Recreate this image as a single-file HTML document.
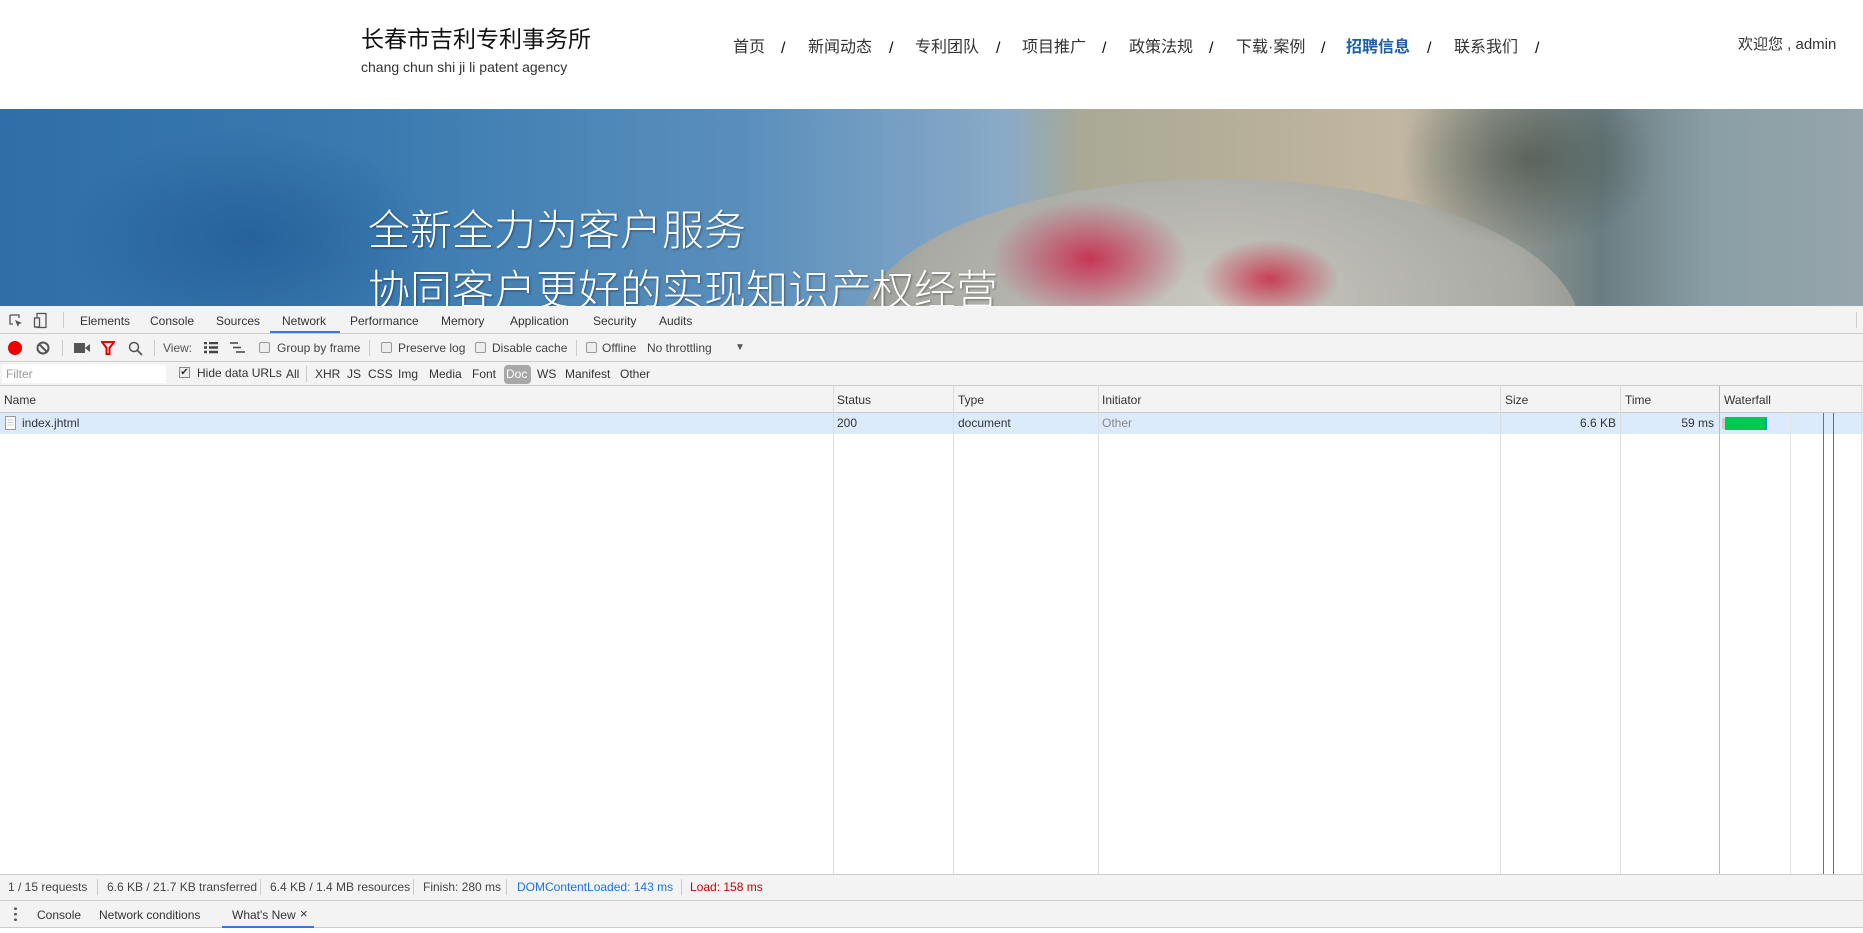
<!DOCTYPE html>
<html><head><meta charset="utf-8">
<style>
*{margin:0;padding:0;box-sizing:border-box}
body{width:1863px;height:933px;overflow:hidden;background:#fff;font-family:"Liberation Sans","Noto Sans CJK SC",sans-serif;position:relative}
.a{position:absolute;white-space:nowrap}
.hdr{position:absolute;left:0;top:0;width:1863px;height:109px;background:#fff}
.nav{font-size:16px;color:#333;top:38px;line-height:20px}
.sl{font-size:16px;color:#111;top:39px;line-height:20px}
.banner{position:absolute;left:0;top:109px;width:1863px;height:197px;overflow:hidden;
background:linear-gradient(90deg,#2f6ea8 0%,#3a7ab0 20%,#5a8fbc 40%,#8aaac8 54%,#a9a995 58%,#b8b09a 68%,#c2b7a2 75%,#6a7d82 86%,#8aa0a6 92%,#95a5ab 100%)}
.bt{color:#fff;font-size:42px;font-weight:300;text-shadow:1px 1px 2px rgba(0,0,0,.4)}
.dt{font-size:12px;color:#333;line-height:15px}
.row{position:absolute;left:0;width:1863px}
.cb{position:absolute;width:11px;height:11px;border:1px solid #999;background:#eee;border-radius:2px}
.sep{position:absolute;width:1px;background:#ccc}
.vl{position:absolute;top:386px;height:488px;width:1px;background:#ddd}
</style></head><body>
<div class="hdr">
 <div class="a" style="left:361px;top:20px;font-size:23px;color:#111">长春市吉利专利事务所</div>
 <div class="a" style="left:361px;top:59px;font-size:14px;color:#333">chang chun shi ji li patent agency</div>
 <div class="a nav" style="left:733px">首页</div><div class="a sl" style="left:781px">/</div>
 <div class="a nav" style="left:808px">新闻动态</div><div class="a sl" style="left:889px">/</div>
 <div class="a nav" style="left:915px">专利团队</div><div class="a sl" style="left:996px">/</div>
 <div class="a nav" style="left:1022px">项目推广</div><div class="a sl" style="left:1102px">/</div>
 <div class="a nav" style="left:1129px">政策法规</div><div class="a sl" style="left:1209px">/</div>
 <div class="a nav" style="left:1236px">下载·案例</div><div class="a sl" style="left:1321px">/</div>
 <div class="a nav" style="left:1346px;color:#1e5fa8;font-weight:bold">招聘信息</div><div class="a sl" style="left:1427px">/</div>
 <div class="a nav" style="left:1454px">联系我们</div><div class="a sl" style="left:1535px">/</div>
 <div class="a" style="left:1738px;top:35px;font-size:15px;line-height:20px;color:#333">欢迎您 , admin</div>
</div>
<div class="banner">
 <div class="a" style="left:60px;top:20px;width:380px;height:220px;background:radial-gradient(ellipse at center,rgba(25,80,140,.55),rgba(25,80,140,0) 70%)"></div>
 <div class="a" style="left:860px;top:70px;width:720px;height:300px;border-radius:50%;background:radial-gradient(ellipse at 50% 40%,#c9c8c0,#a9aaa4 60%,#8a8f8c 80%)"></div>
 <div class="a" style="left:990px;top:90px;width:200px;height:120px;border-radius:40%;background:radial-gradient(ellipse,rgba(200,30,70,.85),rgba(200,30,70,0) 70%)"></div>
 <div class="a" style="left:1200px;top:130px;width:140px;height:80px;border-radius:40%;background:radial-gradient(ellipse,rgba(200,30,60,.8),rgba(200,30,60,0) 70%)"></div>
 <div class="a" style="left:1400px;top:-40px;width:260px;height:180px;border-radius:50%;background:radial-gradient(ellipse,rgba(60,70,60,.6),rgba(60,70,60,0) 70%)"></div>
 <div class="a bt" style="left:368px;top:88px">全新全力为客户服务</div>
 <div class="a bt" style="left:368px;top:148px">协同客户更好的实现知识产权经营</div>
</div>
<!-- devtools -->
<div class="row" style="top:306px;height:28px;background:#f3f3f3;border-bottom:1px solid #ccc"></div>
<svg class="a" style="left:8px;top:313px" width="16" height="16"><path d="M2 2h9v3M2 2v9h3" fill="none" stroke="#555" stroke-width="1.3"/><path d="M7 7l7 3-3 1-1 3z" fill="#555"/></svg>
<svg class="a" style="left:33px;top:312px" width="16" height="17"><rect x="4" y="1.5" width="9" height="14" fill="none" stroke="#555" stroke-width="1.3"/><rect x="1.5" y="6" width="5" height="9" fill="#f3f3f3" stroke="#555" stroke-width="1.3"/></svg>
<div class="sep" style="left:63px;top:312px;height:16px"></div>
<div class="a dt" style="left:80px;top:314px">Elements</div>
<div class="a dt" style="left:150px;top:314px">Console</div>
<div class="a dt" style="left:216px;top:314px">Sources</div>
<div class="a dt" style="left:282px;top:314px">Network</div>
<div class="a" style="left:270px;top:331px;width:70px;height:2px;background:#3879d9"></div>
<div class="a dt" style="left:350px;top:314px">Performance</div>
<div class="a dt" style="left:441px;top:314px">Memory</div>
<div class="a dt" style="left:510px;top:314px">Application</div>
<div class="a dt" style="left:593px;top:314px">Security</div>
<div class="a dt" style="left:659px;top:314px">Audits</div>
<div class="sep" style="left:1856px;top:312px;height:16px"></div>

<div class="row" style="top:334px;height:28px;background:#f3f3f3;border-bottom:1px solid #ccc"></div>
<div class="a" style="left:8px;top:341px;width:14px;height:14px;border-radius:50%;background:#e00"></div>
<svg class="a" style="left:36px;top:341px" width="14" height="14"><circle cx="7" cy="7" r="5.5" fill="none" stroke="#555" stroke-width="2"/><path d="M3 3l8 8" stroke="#555" stroke-width="2"/></svg>
<div class="sep" style="left:62px;top:340px;height:16px"></div>
<svg class="a" style="left:74px;top:343px" width="16" height="10"><rect x="0" y="0" width="11" height="10" fill="#555"/><path d="M11 5l5-4v8z" fill="#555"/></svg>
<svg class="a" style="left:101px;top:341px" width="14" height="14"><path d="M1 1h12l-4.5 6v6h-3v-6z" fill="none" stroke="#e00" stroke-width="2"/></svg>
<svg class="a" style="left:128px;top:341px" width="15" height="15"><circle cx="6" cy="6" r="4.5" fill="none" stroke="#555" stroke-width="1.5"/><path d="M9.5 9.5l4.5 4.5" stroke="#555" stroke-width="1.8"/></svg>
<div class="sep" style="left:154px;top:340px;height:16px"></div>
<div class="a dt" style="left:163px;top:341px;color:#555">View:</div>
<svg class="a" style="left:204px;top:342px" width="14" height="12"><path d="M0 1h3M5 1h9M0 5.5h3M5 5.5h9M0 10h3M5 10h9" stroke="#444" stroke-width="2.5"/></svg>
<svg class="a" style="left:230px;top:342px" width="15" height="12"><path d="M0 1h8M3 5.5h8M6 10h9" stroke="#444" stroke-width="1.6"/></svg>
<div class="cb" style="left:259px;top:342px"></div><div class="a dt" style="left:277px;top:341px;color:#444">Group by frame</div>
<div class="sep" style="left:369px;top:340px;height:16px"></div>
<div class="cb" style="left:381px;top:342px"></div><div class="a dt" style="left:398px;top:341px;color:#444">Preserve log</div>
<div class="cb" style="left:475px;top:342px"></div><div class="a dt" style="left:492px;top:341px;color:#444">Disable cache</div>
<div class="sep" style="left:576px;top:340px;height:16px"></div>
<div class="cb" style="left:586px;top:342px"></div><div class="a dt" style="left:602px;top:341px;color:#444">Offline</div>
<div class="a dt" style="left:647px;top:341px;color:#444">No throttling</div>
<div class="a" style="left:735px;top:342px;font-size:10px;color:#555">▼</div>

<div class="row" style="top:362px;height:24px;background:#f3f3f3;border-bottom:1px solid #ccc"></div>
<div class="a" style="left:2px;top:365px;width:164px;height:18px;background:#fff"></div>
<div class="a dt" style="left:6px;top:367px;color:#999">Filter</div>
<div class="a" style="left:179px;top:367px;width:11px;height:11px;border:1px solid #888;background:#eee;font-size:10px;line-height:9px;text-align:center;color:#333">✔</div>
<div class="a dt" style="left:197px;top:366px">Hide data URLs</div>
<div class="a dt" style="left:286px;top:367px">All</div>
<div class="sep" style="left:306px;top:366px;height:16px"></div>
<div class="a dt" style="left:315px;top:367px">XHR</div>
<div class="a dt" style="left:347px;top:367px">JS</div>
<div class="a dt" style="left:368px;top:367px">CSS</div>
<div class="a dt" style="left:398px;top:367px">Img</div>
<div class="a dt" style="left:429px;top:367px">Media</div>
<div class="a dt" style="left:472px;top:367px">Font</div>
<div class="a" style="left:504px;top:365px;width:27px;height:19px;border-radius:4px;background:#a8a8a8"></div>
<div class="a dt" style="left:506px;top:367px;color:#fff">Doc</div>
<div class="a dt" style="left:537px;top:367px">WS</div>
<div class="a dt" style="left:565px;top:367px">Manifest</div>
<div class="a dt" style="left:620px;top:367px">Other</div>

<div class="row" style="top:386px;height:27px;background:#f3f3f3;border-bottom:1px solid #ccc"></div>
<div class="row" style="top:413px;height:21px;background:#dcebfc"></div>
<div class="vl" style="left:833px"></div><div class="vl" style="left:953px"></div><div class="vl" style="left:1098px"></div>
<div class="vl" style="left:1500px"></div><div class="vl" style="left:1620px"></div><div class="vl" style="left:1719px;background:#bbb"></div>
<div class="vl" style="left:1790px;top:413px;height:461px;background:#e3e3e3"></div>
<div class="vl" style="left:1861px"></div>
<div class="a dt" style="left:4px;top:393px">Name</div>
<div class="a dt" style="left:837px;top:393px">Status</div>
<div class="a dt" style="left:958px;top:393px">Type</div>
<div class="a dt" style="left:1102px;top:393px">Initiator</div>
<div class="a dt" style="left:1505px;top:393px">Size</div>
<div class="a dt" style="left:1625px;top:393px">Time</div>
<div class="a dt" style="left:1724px;top:393px">Waterfall</div>
<svg class="a" style="left:5px;top:416px" width="11" height="14"><rect x="0.5" y="0.5" width="10" height="13" fill="#fff" stroke="#999"/><path d="M2.5 4h6M2.5 6.5h6M2.5 9h6" stroke="#ccc"/></svg>
<div class="a dt" style="left:22px;top:416px">index.jhtml</div>
<div class="a dt" style="left:837px;top:416px">200</div>
<div class="a dt" style="left:958px;top:416px">document</div>
<div class="a dt" style="left:1102px;top:416px;color:#888">Other</div>
<div class="a dt" style="left:1500px;top:416px;width:116px;text-align:right">6.6 KB</div>
<div class="a dt" style="left:1620px;top:416px;width:94px;text-align:right">59 ms</div>
<div class="a" style="left:1722px;top:418px;width:3px;height:11px;background:#ccc"></div>
<div class="a" style="left:1725px;top:417px;width:40px;height:13px;background:#00c853"></div>
<div class="a" style="left:1765px;top:417px;width:2px;height:13px;background:#1a8cff"></div>
<div class="a" style="left:1823px;top:413px;width:1px;height:461px;background:#3879d9"></div>
<div class="a" style="left:1833px;top:413px;width:1px;height:461px;background:#c44"></div>

<div class="row" style="top:874px;height:27px;background:#f3f3f3;border-top:1px solid #ccc;border-bottom:1px solid #ccc"></div>
<div class="a dt" style="left:8px;top:880px;color:#444">1 / 15 requests</div>
<div class="sep" style="left:97px;top:879px;height:16px"></div>
<div class="a dt" style="left:107px;top:880px;color:#444">6.6 KB / 21.7 KB transferred</div>
<div class="sep" style="left:260px;top:879px;height:16px"></div>
<div class="a dt" style="left:270px;top:880px;color:#444">6.4 KB / 1.4 MB resources</div>
<div class="sep" style="left:413px;top:879px;height:16px"></div>
<div class="a dt" style="left:423px;top:880px;color:#444">Finish: 280 ms</div>
<div class="sep" style="left:506px;top:879px;height:16px"></div>
<div class="a dt" style="left:517px;top:880px;color:#1a73e8">DOMContentLoaded: 143 ms</div>
<div class="sep" style="left:681px;top:879px;height:16px"></div>
<div class="a dt" style="left:690px;top:880px;color:#c00">Load: 158 ms</div>

<div class="row" style="top:901px;height:27px;background:#f3f3f3;border-bottom:1px solid #ccc"></div>
<div class="a" style="left:14px;top:906px;width:3px;height:16px;background:radial-gradient(circle,#555 1.3px,transparent 1.5px) 0 0/3px 5.5px"></div>
<div class="a dt" style="left:37px;top:908px">Console</div>
<div class="a dt" style="left:99px;top:908px">Network conditions</div>
<div class="a dt" style="left:232px;top:908px">What's New</div>
<div class="a" style="left:300px;top:906px;font-size:13px;color:#333">×</div>
<div class="a" style="left:222px;top:926px;width:92px;height:2px;background:#3879d9"></div>
<div class="row" style="top:928px;height:5px;background:#fff"></div>
</body></html>
